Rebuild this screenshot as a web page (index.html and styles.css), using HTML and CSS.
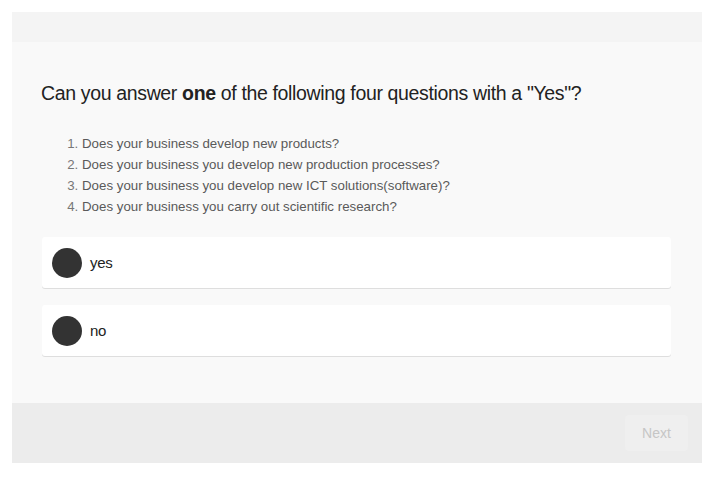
FILE: index.html
```html
<!DOCTYPE html>
<html>
<head>
<meta charset="utf-8">
<link rel="stylesheet" href="styles.css">
</head>
<body>
<div class="wrap">
  <div class="head"></div>
  <div class="main">
    <h1 class="title">Can you answer <b>one</b> of the following four questions with a "Yes"?</h1>
    <ol class="qs">
      <li>Does your business develop new products?</li>
      <li>Does your business you develop new production processes?</li>
      <li>Does your business you develop new ICT solutions(software)?</li>
      <li>Does your business you carry out scientific research?</li>
    </ol>
    <div class="opts">
      <div class="opt"><span class="dot"></span><span class="lbl">yes</span></div>
      <div class="opt"><span class="dot"></span><span class="lbl">no</span></div>
    </div>
  </div>
  <div class="foot">
    <button class="next">Next</button>
  </div>
</div>
</body>
</html>
```
FILE: styles.css
```css
html, body { margin: 0; padding: 0; background: #fff; }
body { font-family: "Liberation Sans", Arial, sans-serif; color: #222; }
.wrap { margin: 12px; width: 690px; }
.head { height: 30px; background: #f4f4f4; }
.main { background: #f9f9f9; height: 361px; box-sizing: border-box; padding: 39px 31px 0 29px; }
.title { margin: 0; font-size: 19.5px; font-weight: normal; line-height: 24px; color: #222; letter-spacing: -0.35px; }
.title b { font-weight: bold; }
.qs { margin: 28px 0 0 0; padding-left: 41px; font-size: 13.3px; line-height: 21px; color: #5a5a5a; letter-spacing: 0; }
.qs li::marker { color: #777; }
.opts { margin-top: 20px; margin-left: 1px; display: flex; flex-direction: column; gap: 16px; }
.opt { height: 51px; margin-bottom: 1px; background: #fff; border-radius: 3px; box-shadow: 0 1px 0 #dedede; display: flex; align-items: center; padding-left: 10px; }
.opt + .opt { margin-top: 0; }
.dot { width: 30px; height: 30px; border-radius: 50%; background: #333; }
.lbl { margin-left: 8px; font-size: 15px; color: #222; letter-spacing: -0.3px; }
.foot { height: 60px; background: #ececec; display: flex; justify-content: flex-end; align-items: flex-start; padding: 12px 14px 0 0; box-sizing: border-box; }
.next { width: 63px; height: 36px; border: none; border-radius: 4px; background: #efefef; color: #c6c6c6; font-family: "Liberation Sans", Arial, sans-serif; font-size: 14px; padding: 0; }
```
